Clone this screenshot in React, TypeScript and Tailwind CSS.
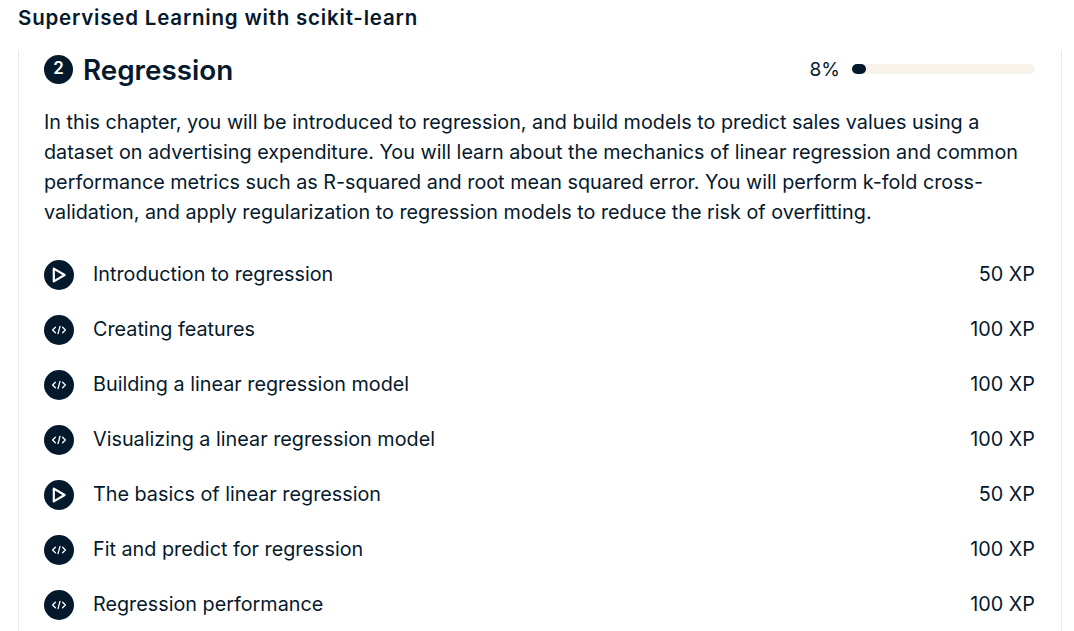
const font = "[font-family:Inter,'Liberation_Sans',sans-serif]";

const lessons = [
  { title: "Introduction to regression", xp: 50, video: true },
  { title: "Creating features", xp: 100, video: false },
  { title: "Building a linear regression model", xp: 100, video: false },
  { title: "Visualizing a linear regression model", xp: 100, video: false },
  { title: "The basics of linear regression", xp: 50, video: true },
  { title: "Fit and predict for regression", xp: 100, video: false },
  { title: "Regression performance", xp: 100, video: false },
];

const LessonIcon = ({ video }: { video: boolean }) => (
  <div className="w-[30px] h-[30px] rounded-full bg-[#05192d] flex items-center justify-center shrink-0">
    {video ? (
      <svg width="18" height="18" viewBox="0 0 18 18" fill="none">
        <path d="M3.8 2.6 L14.6 9 L3.8 15.4 Z" stroke="white" strokeWidth="2.2" strokeLinejoin="round" />
      </svg>
    ) : (
      <svg width="16" height="16" viewBox="0 0 16 16" fill="none" stroke="white" strokeWidth="1.3" strokeLinecap="round" strokeLinejoin="round">
        <path d="M4.4 5.2 L1.6 8 L4.4 10.8" />
        <path d="M11.6 5.2 L14.4 8 L11.6 10.8" />
        <path d="M9 4.4 L7 11.6" />
      </svg>
    )}
  </div>
);

export default function App() {
  return (
    <div className={`h-[631px] overflow-hidden bg-white text-[#05192d] ${font}`}>
      <h1 className="pl-[18px] h-[36px] flex items-center text-[20.5px] tracking-[0.8px] font-semibold">
        Supervised Learning with scikit-learn
      </h1>
      <div className="mt-[14px] mx-[18px] w-[1044px] border-x border-[#e8e8ea] pl-[25px] pr-[26px]">
        <div className="flex items-center justify-between h-[38px]">
          <div className="flex items-center gap-[9px]">
            <span className="w-[29px] h-[29px] mr-[1px] rounded-full bg-[#05192d] text-white text-[17px] font-semibold flex items-center justify-center">
              2
            </span>
            <h2 className="pt-[4px] text-[27.8px] font-semibold">Regression</h2>
          </div>
          <div className="flex items-center gap-[12px]">
            <span className="pt-[2px] text-[19px]">8%</span>
            <div className="w-[183px] h-[10px] rounded-full bg-[#f7f3eb]">
              <div className="w-[14px] h-[10px] rounded-full bg-[#05192d]" />
            </div>
          </div>
        </div>
        <p className="mt-[19px] text-[19.8px] leading-[30px]">
          In this chapter, you will be introduced to regression, and build models to predict sales values using a
          <br />
          dataset on advertising expenditure. You will learn about the mechanics of linear regression and common
          <br />
          performance metrics such as R-squared and root mean squared error. You will perform k-fold cross-
          <br />
          validation, and apply regularization to regression models to reduce the risk of overfitting.
        </p>
        <ul className="mt-[20px]">
          {lessons.map((l) => (
            <li key={l.title} className="h-[55px] flex items-center justify-between">
              <div className="flex items-center gap-[19px]">
                <LessonIcon video={l.video} />
                <span className="text-[19.8px]">{l.title}</span>
              </div>
              <span className="text-[19.8px]">{l.xp} XP</span>
            </li>
          ))}
        </ul>
      </div>
    </div>
  );
}
